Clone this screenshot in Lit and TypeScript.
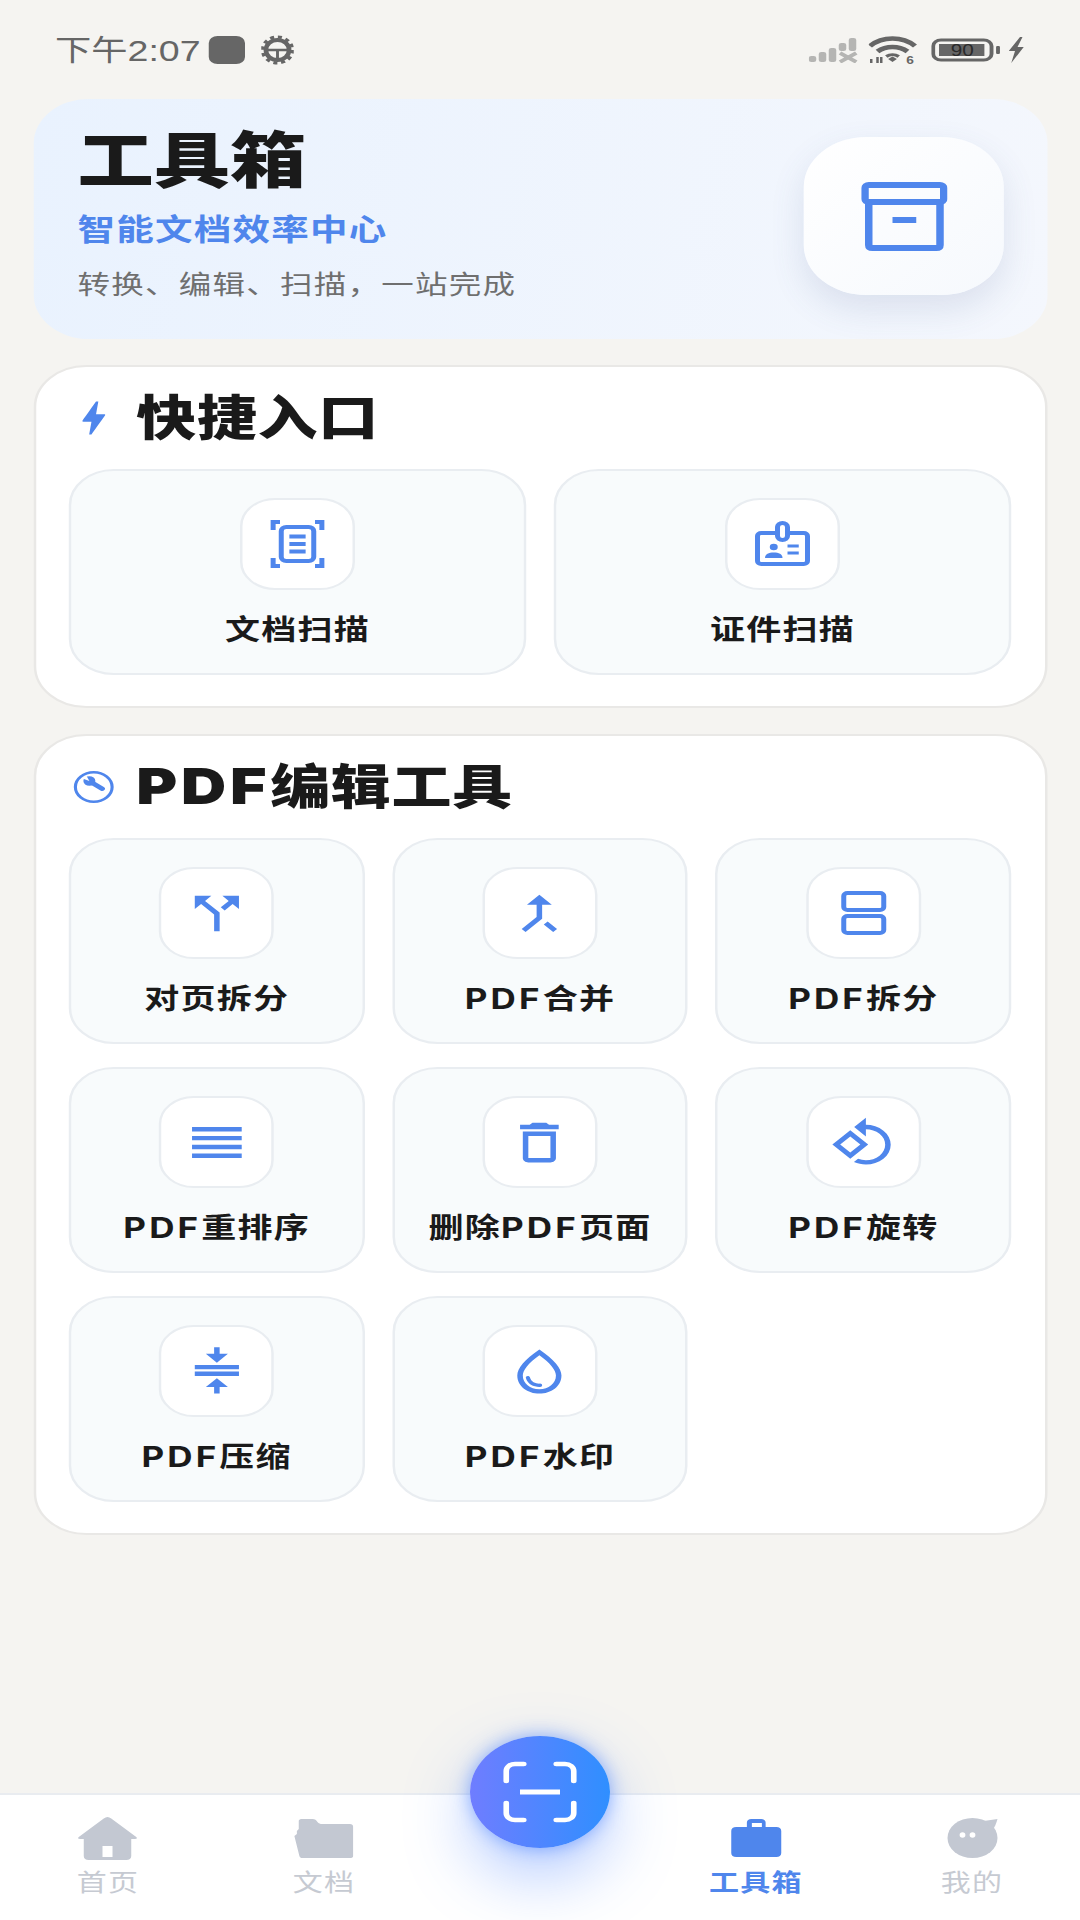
import { LitElement, css, html, svg } from "lit";
import { customElement } from "lit/decorators.js";

// the reference is stretched 1.25x wide, so the page is laid out at 864px and scaled
const mat = (d: unknown) => html`<svg class="mat" viewBox="0 0 24 24" fill="#4f86ec">${d}</svg>`;
const box48 = (d: unknown) => html`<svg class="b48" viewBox="0 0 48 48" fill="none" stroke="#4f86ec" stroke-width="4">${d}</svg>`;

const icons: Record<string, unknown> = {
  scan: box48(svg`
    <path d="M10 2H4.500v8M38 2h5.500v8M10 46H4.500v-8M38 46h5.500v-8"/>
    <rect x="11" y="7" width="26" height="34" rx="4"/>
    <path d="M17.500 16.500h13M17.500 24h13M17.500 31.500h13"/>`),
  card: box48(svg`
    <rect x="4" y="13" width="40" height="31" rx="3"/>
    <rect x="20" y="3" width="8" height="17" rx="4" fill="#fff"/>
    <circle cx="17" cy="27" r="3.200" fill="#4f86ec" stroke="none"/>
    <path d="M10 38c0-4 3-5.500 7-5.500s7 1.500 7 5.500z" fill="#4f86ec" stroke="none"/>
    <path d="M28 26h9M28 33h9" stroke-width="3"/>`),
  split: mat(svg`<path d="M14 4l2.290 2.290-2.880 2.880 1.420 1.420 2.880-2.880L20 10V4zm-4 0H4v6l2.290-2.290 4.710 4.700V20h2v-8.410l-5.290-5.300z"/>`),
  merge: mat(svg`<path d="M17 20.410L18.410 19 15 15.590 13.590 17 17 20.410zM7.500 8H11v5.590L5.590 19 7 20.410l6-6V8h3.500L12 3.500 7.500 8z"/>`),
  rows: box48(svg`
    <rect x="8" y="4" width="32" height="17" rx="3"/>
    <rect x="8" y="27" width="32" height="17" rx="3"/>`),
  reorder: mat(svg`<path d="M3 15h18v-2H3v2zm0 4h18v-2H3v2zm0-8h18V9H3v2zm0-6v2h18V5H3z"/>`),
  trash: mat(svg`<path d="M6 19c0 1.100.9 2 2 2h8c1.100 0 2-.9 2-2V7H6v12zM8 9h8v10H8V9zm7.500-5l-1-1h-5l-1 1H5v2h14V4z"/>`),
  rotate: mat(svg`<path d="M7.340 6.410L.86 12.900l6.490 6.480 6.490-6.480-6.500-6.490zM3.690 12.900l3.660-3.660L11 12.900l-3.660 3.660-3.650-3.660zm15.670-6.260C17.610 4.880 15.300 4 13 4V.76L8.760 5 13 9.240V6c1.790 0 3.580.68 4.950 2.050 2.730 2.730 2.730 7.170 0 9.900C16.580 19.320 14.790 20 13 20c-.97 0-1.940-.21-2.840-.61l-1.490 1.490C10.020 21.620 11.510 22 13 22c2.300 0 4.610-.88 6.360-2.640 3.520-3.510 3.520-9.210 0-12.720z"/>`),
  compress: mat(svg`<path d="M8 19h3v3h2v-3h3l-4-4-4 4zm8-15h-3V1h-2v3H8l4 4 4-4zM4 9v2h16V9H4z"/><path d="M4 12h16v2H4z"/>`),
  drop: mat(svg`<path d="M12 2c-5.330 4.550-8 8.480-8 11.800 0 4.980 3.800 8.200 8 8.200s8-3.220 8-8.200C20 10.480 17.330 6.550 12 2zm0 18c-3.350 0-6-2.570-6-6.200 0-2.340 1.950-5.440 6-9.140 4.050 3.700 6 6.790 6 9.140C18 17.430 15.350 20 12 20zM7.830 14c.37 0 .67.26.74.62.41 2.220 2.280 2.980 3.640 2.870.43-.02.79.32.79.75 0 .4-.32.73-.72.75-2.130.13-4.620-1.090-5.190-4.120C7.010 14.420 7.370 14 7.830 14z"/>`),
};

const quick = [
  { label: "文档扫描", icon: "scan" },
  { label: "证件扫描", icon: "card" },
];

const tools = [
  { label: "对页拆分", icon: "split" },
  { label: "PDF合并", icon: "merge" },
  { label: "PDF拆分", icon: "rows" },
  { label: "PDF重排序", icon: "reorder" },
  { label: "删除PDF页面", icon: "trash" },
  { label: "PDF旋转", icon: "rotate" },
  { label: "PDF压缩", icon: "compress" },
  { label: "PDF水印", icon: "drop" },
];

const tabs = [
  {
    label: "首页",
    icon: svg`<path d="M24 2c1 0 2 .5 3 1.500L47 22c1 1 .5 2-1 2h-3v17c0 2.500-1.500 4-4 4H9c-2.500 0-4-1.500-4-4V24H2c-1.500 0-2-1-1-2L21 3.500C22 2.500 23 2 24 2z"/><rect x="20" y="31" width="8" height="11" fill="#fff"/>`,
  },
  {
    label: "文档",
    icon: svg`<path d="M6 4h9c2 0 3 1 4 3 1 1.500 2 2 4 2h22c1.500 0 2.500 1 2.500 2.500V41c0 1.500-1 2-2.500 2H7c-1.500 0-2-.5-2.500-2L.5 21l2-2v-3L4 14V6c0-1 .8-2 2-2z"/>`,
  },
  { label: "", icon: null },
  {
    label: "工具箱",
    active: true,
    icon: svg`<path fill-rule="evenodd" d="M16.500 12V7.500c0-2 1.500-3.500 3.500-3.500h8c2 0 3.500 1.500 3.500 3.500V12H40c2.500 0 4 1.500 4 4v22c0 2.500-1.500 4-4 4H8c-2.500 0-4-1.500-4-4V16c0-2.500 1.500-4 4-4zm4 0h8V8h-8z"/>`,
  },
  {
    label: "我的",
    icon: svg`<circle cx="24" cy="23" r="20"/><path d="M33 6l11-2c-1 4-2 8-4 11z"/><ellipse cx="16" cy="20" rx="2.300" ry="2.800" fill="#fff"/><ellipse cx="24" cy="20" rx="2.300" ry="2.800" fill="#fff"/>`,
  },
];

@customElement("app-root")
export class AppRoot extends LitElement {
  static styles = css`
    :host {
      display: block;
      width: 1080px;
      height: 1920px;
      overflow: hidden;
      background: #f5f4f1;
      font-family: "Noto Sans CJK SC", "Noto Sans", sans-serif;
    }
    .page {
      width: 864px;
      height: 1920px;
      display: flex;
      flex-direction: column;
      position: relative;
      transform: scaleX(1.25);
      transform-origin: 0 0;
    }

    .status {
      height: 99px;
      box-sizing: border-box;
      flex: none;
      padding: 0 44px 0 44px;
      display: flex;
      align-items: center;
      justify-content: space-between;
      color: #666;
    }
    .status-left,
    .status-right {
      display: flex;
      align-items: center;
    }
    .time {
      font-size: 29px;
      line-height: 36px;
    }
    .time b {
      font-family: "Liberation Sans", sans-serif;
      font-weight: 400;
      font-size: 30px;
    }
    .square {
      width: 29px;
      height: 28px;
      margin-left: 7px;
      border-radius: 7px;
      background: #666;
    }
    .gear {
      margin-left: 13px;
    }
    .wifi {
      margin: 4px 0 0 8px;
    }
    .battery {
      margin-left: 10px;
    }
    .charge {
      margin-left: 5px;
    }

    .main {
      flex: 1;
      display: flex;
      flex-direction: column;
      gap: 26px;
      padding: 0 26px 0 27px;
    }
    .hero {
      height: 240px;
      box-sizing: border-box;
      padding: 0 35px;
      border-radius: 44px;
      background: linear-gradient(100deg, #e9f2fe, #f4f7fd);
      display: flex;
      align-items: center;
      justify-content: space-between;
    }
    .hero-text {
      align-self: flex-start;
      padding-top: 23px;
    }
    .hero h1 {
      margin: 0;
      font-size: 61px;
      line-height: 70px;
      font-weight: 900;
      color: #1a1a1a;
    }
    .hero .sub {
      font-size: 30px;
      line-height: 40px;
      font-weight: 700;
      letter-spacing: 1px;
      color: #4f86ec;
      margin-top: 15px;
    }
    .hero .desc {
      font-size: 26px;
      line-height: 36px;
      letter-spacing: 1px;
      color: #6f6f6f;
      margin-top: 18px;
    }
    .hero-icon {
      width: 160px;
      height: 158px;
      margin-bottom: 6px;
      border-radius: 50px;
      background: linear-gradient(135deg, #ffffff, #f6f9fd);
      box-shadow: 0 14px 30px rgba(70, 90, 140, 0.14);
      display: flex;
      align-items: center;
      justify-content: center;
    }
    .hero-icon svg {
      width: 69px;
      height: 69px;
    }

    .card {
      box-sizing: border-box;
      background: #fff;
      border: 2px solid #e9e8e6;
      border-radius: 42px;
      padding: 0 27px 31px 26px;
    }
    .card header {
      height: 102px;
      display: flex;
      align-items: center;
      font-family: Inter, "Noto Sans CJK SC", sans-serif;
      font-size: 48px;
      font-weight: 900;
      color: #1a1a1a;
      letter-spacing: 0.5px;
    }
    .card header span {
      margin-bottom: 9px;
    }
    .card header b {
      font-size: 50px;
      font-weight: 900;
      letter-spacing: 3px;
    }
    .bolt {
      width: 44px;
      height: 44px;
      margin: 0 12px 0 -2px;
    }
    .wrench {
      width: 36px;
      height: 36px;
      margin: 0 16px 0 2px;
    }
    .grid {
      display: grid;
      gap: 23px 22px;
    }
    .grid.two {
      grid-template-columns: repeat(2, 1fr);
    }
    .grid.three {
      grid-template-columns: repeat(3, 1fr);
    }
    .tile {
      height: 206px;
      box-sizing: border-box;
      padding-top: 27px;
      border: 2px solid #e9edf1;
      border-radius: 36px;
      background: #f8fbfc;
      display: flex;
      flex-direction: column;
      align-items: center;
    }
    .tile-icon {
      width: 92px;
      height: 92px;
      box-sizing: border-box;
      border: 2px solid #e9edf1;
      border-radius: 28px;
      background: #fff;
      display: flex;
      align-items: center;
      justify-content: center;
    }
    .mat {
      width: 53px;
      height: 53px;
      flex: none;
    }
    .b48 {
      width: 48px;
      height: 48px;
      flex: none;
    }
    .tile-label {
      margin-top: 20px;
      font-family: Inter, "Noto Sans CJK SC", sans-serif;
      font-size: 28px;
      line-height: 40px;
      font-weight: 700;
      letter-spacing: 1px;
      color: #1a1a1a;
    }
    .tile-label b {
      font-weight: 700;
      letter-spacing: 2.500px;
    }

    .nav {
      flex: none;
      height: 127px;
      box-sizing: border-box;
      border-top: 2px solid #e9ecf0;
      background: #fff;
      display: grid;
      grid-template-columns: repeat(5, 1fr);
    }
    .tab {
      display: flex;
      flex-direction: column;
      align-items: center;
      padding-top: 20px;
      color: #c6cad2;
      fill: #c3c8d2;
      position: relative;
      z-index: 1;
    }
    .tab svg {
      width: 48px;
      height: 48px;
    }
    .tab span {
      font-size: 24px;
      line-height: 34px;
      letter-spacing: 1px;
      margin-top: 1px;
    }
    .tab.active {
      color: #4f86ec;
      fill: #4f86ec;
    }
    .tab.active span {
      font-weight: 700;
    }
    .fab {
      position: absolute;
      left: 376px;
      top: 1736px;
      width: 112px;
      height: 112px;
      border-radius: 50%;
      background: linear-gradient(90deg, #6f7dff, #2f8fff);
      box-shadow: 0 0 16px rgba(60, 120, 255, 0.55), 0 26px 60px rgba(60, 120, 255, 0.4);
      display: flex;
      align-items: center;
      justify-content: center;
      z-index: 0;
    }
    .fab svg {
      width: 64px;
      height: 64px;
    }
  `;

  // the PDF letters are set wider than the Chinese around them
  latin(text: string) {
    return text.split(/(PDF)/).map((part) => (part === "PDF" ? html`<b>${part}</b>` : part));
  }

  tile(t: { label: string; icon: string }) {
    return html`
      <div class="tile">
        <div class="tile-icon">${icons[t.icon]}</div>
        <div class="tile-label">${this.latin(t.label)}</div>
      </div>
    `;
  }

  render() {
    return html`
      <div class="page">
        <div class="status">
          <div class="status-left">
            <span class="time">下午<b>2:07</b></span>
            <div class="square"></div>
            <svg class="gear" width="26" height="30" viewBox="0 0 28 30" preserveAspectRatio="none" fill="none" stroke="#666">
              <circle cx="14" cy="15" r="10" stroke-width="4"/>
              <circle cx="14" cy="15" r="13" stroke-width="3" stroke-dasharray="3.500 3.300"/>
              <path d="M4 15h20M14 15v10" stroke-width="2.500"/>
            </svg>
          </div>
          <div class="status-right">
            <svg width="40" height="26" viewBox="0 0 40 26" fill="#b5b5b3">
              <rect x="0" y="19" width="6" height="6" rx="2"/>
              <rect x="8" y="15" width="6" height="10" rx="2"/>
              <rect x="16" y="11" width="6" height="14" rx="2"/>
              <rect x="24" y="6" width="6" height="8" rx="2"/>
              <rect x="32" y="1" width="6" height="13" rx="2"/>
              <path d="M25 16l13 9M38 16l-13 9" stroke="#b5b5b3" stroke-width="3.500"/>
            </svg>
            <svg class="wifi" width="40" height="32" viewBox="0 0 40 32" fill="none" stroke="#666" stroke-width="4.500">
              <path d="M1 10c10-10 26-10 36 0"/>
              <path d="M7 15.500c7-6 17-6 24 0"/>
              <path d="M14 20.500c3-2.500 7-2.500 10 0" stroke-width="3"/>
              <path d="M15.500 23l3.500-2.500 3.500 2.500-3.500 3z" fill="#666" stroke="none"/>
              <path d="M2 23v4M7 21v6M10 21v6" stroke-width="2"/>
              <text x="30" y="28" font-size="11" font-weight="700" fill="#666" stroke="none" font-family="Liberation Sans">6</text>
            </svg>
            <svg class="battery" width="56" height="24" viewBox="0 0 54 24" preserveAspectRatio="none">
              <rect x="1.500" y="2" width="45" height="20" rx="6" fill="none" stroke="#666" stroke-width="3"/>
              <rect x="6" y="6" width="35" height="12" fill="#666"/>
              <rect x="50" y="8" width="3" height="8" rx="1" fill="#666"/>
              <text x="24" y="18.500" font-size="16" text-anchor="middle" fill="#2a2a2a" font-family="Liberation Sans">90</text>
            </svg>
            <svg class="charge" width="14" height="26" viewBox="0 0 14 26" fill="#666">
              <path d="M10 0 1 14h5L3 26 13 10H8l4-10z"/>
            </svg>
          </div>
        </div>

        <div class="main">
          <section class="hero">
            <div class="hero-text">
              <h1>工具箱</h1>
              <div class="sub">智能文档效率中心</div>
              <div class="desc">转换、编辑、扫描，一站完成</div>
            </div>
            <div class="hero-icon">
              <svg viewBox="0 0 69 69" fill="none" stroke="#4f86ec" stroke-width="6">
                <rect x="3" y="3" width="63" height="17" rx="3"/>
                <path d="M6 20v43c0 2 1 3 3 3h51c2 0 3-1 3-3V20"/>
                <path d="M25 38h19"/>
              </svg>
            </div>
          </section>

          <section class="card">
            <header>
              <svg class="bolt" viewBox="0 0 24 24" fill="#4f86ec">
                <path d="M11 21h-1l1-7H7.500c-.58 0-.57-.32-.38-.66.19-.34.05-.08.07-.12C8.480 10.940 10.420 7.540 13 3h1l-1 7h3.500c.49 0 .56.33.47.51l-.07.15C12.960 17.550 11 21 11 21z"/>
              </svg>
              <span>快捷入口</span>
            </header>
            <div class="grid two">${quick.map((t) => this.tile(t))}</div>
          </section>

          <section class="card">
            <header>
              <svg class="wrench" viewBox="0 0 36 36" fill="none" stroke="#4f86ec" stroke-width="2.500">
                <circle cx="18" cy="18" r="14.700"/>
                <path d="M15 12.500l9.700 7.200" stroke-width="4.500" stroke-linecap="round"/>
                <circle cx="14.500" cy="12" r="4.800" fill="#4f86ec" stroke="none"/>
                <path d="M9 9.500l5.500 2.500-2.500-5.500z" fill="#fff" stroke="none"/>
              </svg>
              <span>${this.latin("PDF编辑工具")}</span>
            </header>
            <div class="grid three">${tools.map((t) => this.tile(t))}</div>
          </section>
        </div>

        <div class="fab">
          <svg viewBox="0 0 64 64" fill="none" stroke="#fff" stroke-width="4.500" stroke-linecap="round">
            <path d="M5 21V11c0-4 3-7 7-7h7M59 21V11c0-4-3-7-7-7h-7M5 43v10c0 4 3 7 7 7h7M59 43v10c0 4-3 7-7 7h-7"/>
            <path d="M16 32h32" stroke-linecap="butt" stroke-width="5"/>
          </svg>
        </div>
        <nav class="nav">
          ${tabs.map((t) =>
            t.icon
              ? html`<div class="tab ${t.active ? "active" : ""}">
                  <svg viewBox="0 0 48 48">${t.icon}</svg>
                  <span>${t.label}</span>
                </div>`
              : html`<div></div>`
          )}
        </nav>
      </div>
    `;
  }
}
